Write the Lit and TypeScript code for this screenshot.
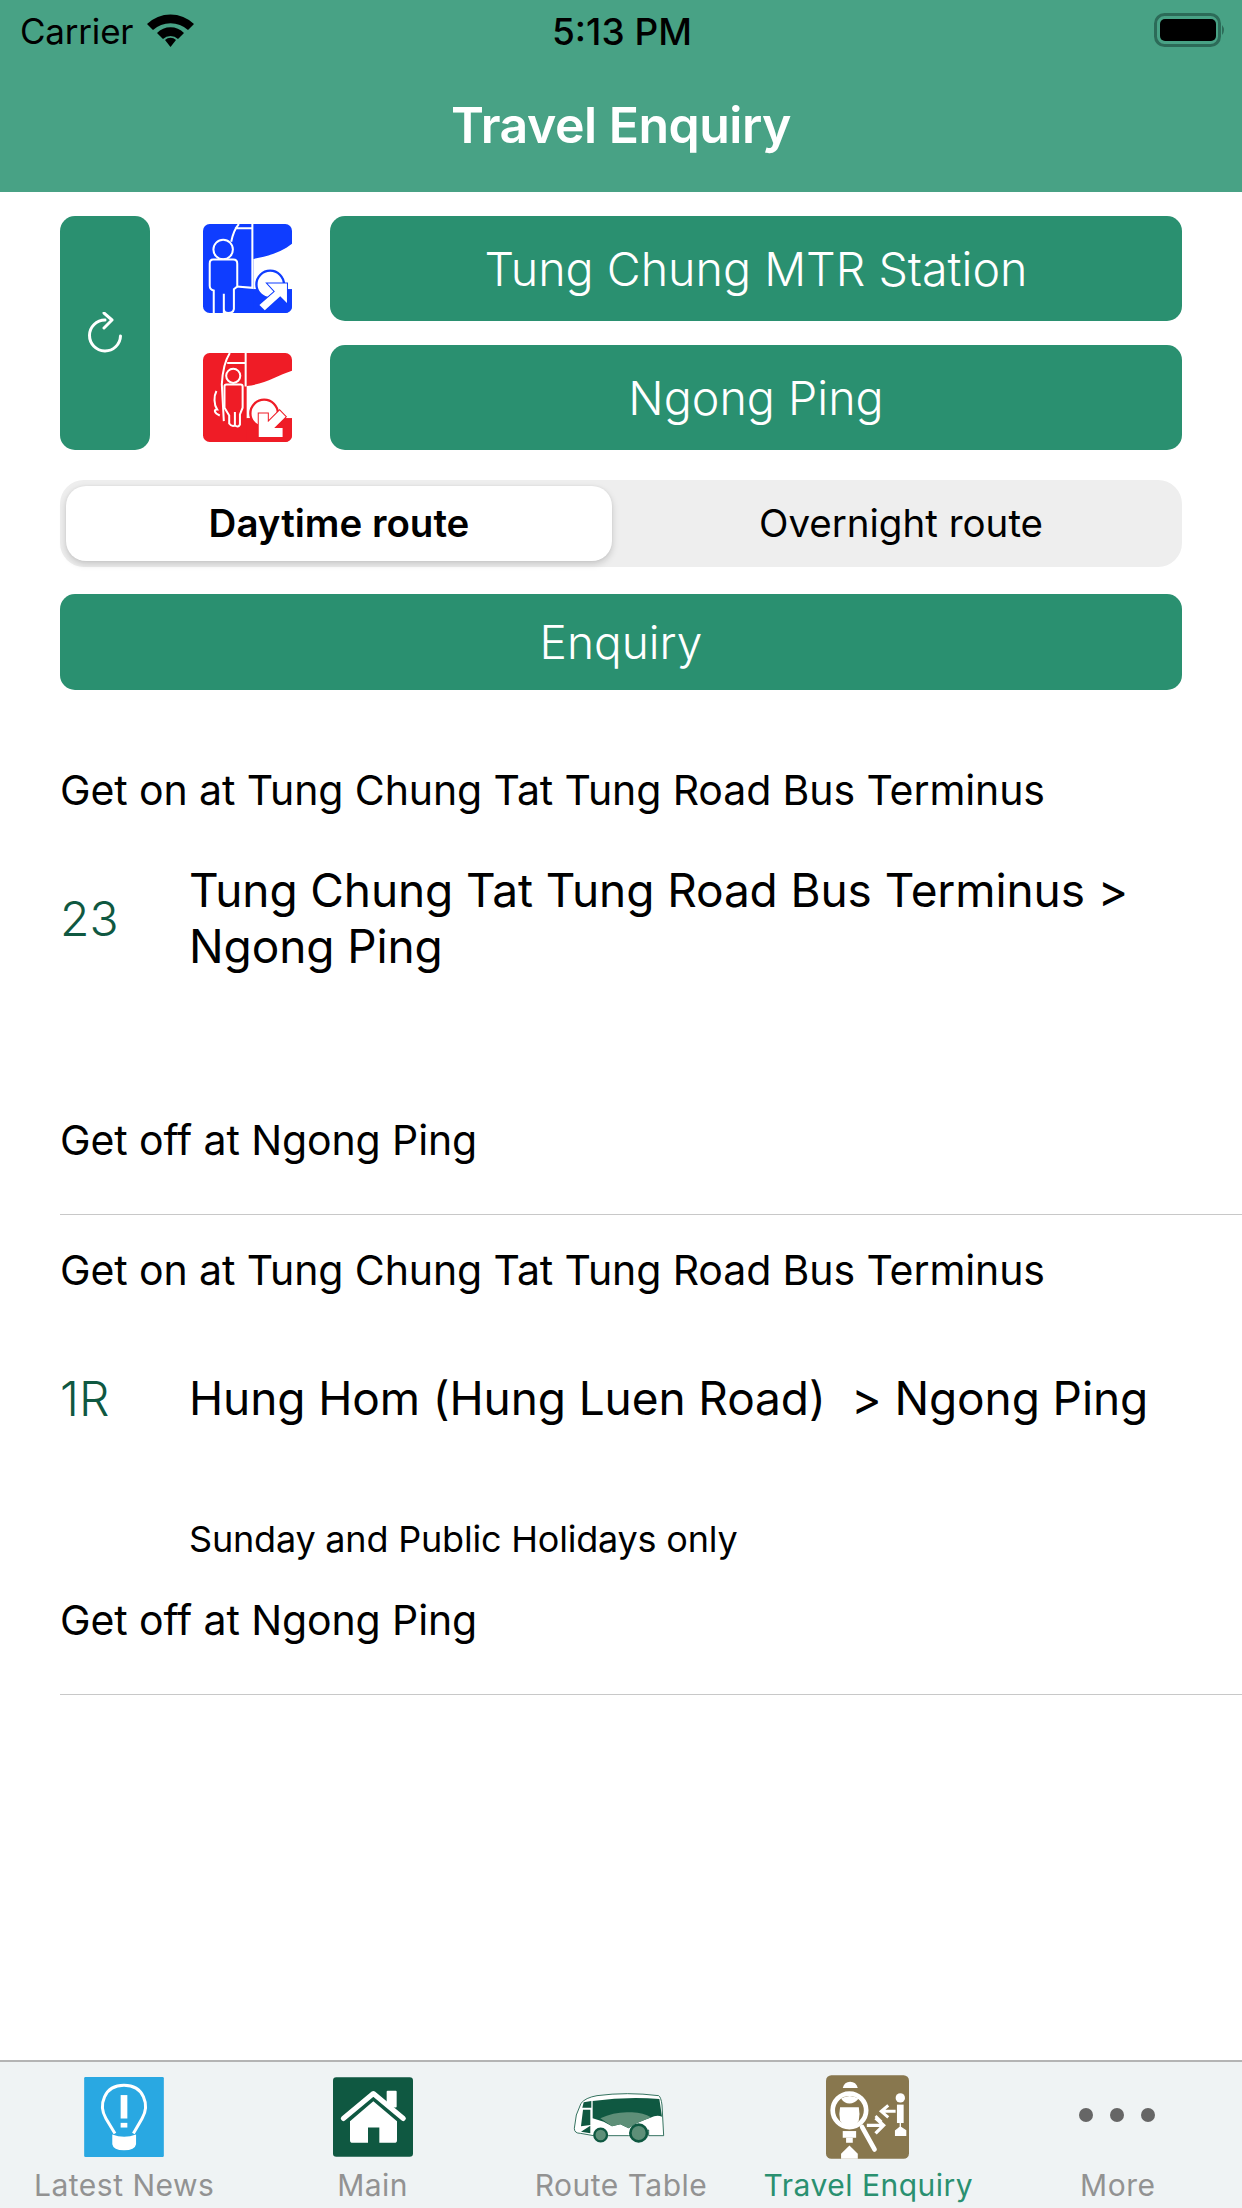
import { LitElement, html, css, svg } from "lit";
import { customElement } from "lit/decorators.js";

const results = [
  { on: "Get on at Tung Chung Tat Tung Road Bus Terminus", num: "23", title: "Tung Chung Tat Tung Road Bus Terminus > Ngong Ping", note: "", off: "Get off at Ngong Ping" },
  { on: "Get on at Tung Chung Tat Tung Road Bus Terminus", num: "1R", title: "Hung Hom (Hung Luen Road)  > Ngong Ping", note: "Sunday and Public Holidays only", off: "Get off at Ngong Ping" },
];

const blueIcon = html`<svg class="stop" viewBox="40 42 265 265">
  <defs><clipPath id="cb"><rect x="40" y="42" width="265" height="265" rx="20"/></clipPath></defs>
  <g clip-path="url(#cb)">
  <rect x="40" y="42" width="265" height="265" fill="#0f3dff"/>
  <path d="M190 146C235 138 275 125 305 101V236H190Z" fill="#fff"/>
  <path d="M187 42V232L140 228M147 42C135 55 128 75 124 95M135 55L187 55" fill="none" stroke="#fff" stroke-width="6"/>
  <circle cx="100" cy="118" r="29" fill="#0f3dff" stroke="#fff" stroke-width="6"/>
  <path d="M70 148H130Q142 148 142 160V228L132 236V295Q130 307 115 307Q102 307 102 295V250 310H72V240Q60 238 60 226V160Q60 148 70 148Z" fill="#0f3dff" stroke="#fff" stroke-width="6"/>
  <path d="M190 236H305V307H190Z" fill="#0f3dff"/>
  <circle cx="240" cy="222" r="41" fill="#fff" stroke="#0f3dff" stroke-width="7"/>
  <path d="M208 283L254 243L232 219H290V277L270 257L224 299Z" fill="#fff" stroke="#0f3dff" stroke-width="6" paint-order="stroke"/>
  </g>
</svg>`;

const redIcon = html`<svg class="stop" viewBox="40 42 265 265">
  <defs><clipPath id="cr"><rect x="40" y="42" width="265" height="265" rx="20"/></clipPath></defs>
  <g clip-path="url(#cr)">
  <rect x="40" y="42" width="265" height="265" fill="#ef1c26"/>
  <path d="M170 140C225 135 260 110 305 95V236H170Z" fill="#fff"/>
  <path d="M167 42V142M120 42C105 65 98 100 96 135L102 245M112 72H167" fill="none" stroke="#fff" stroke-width="6"/>
  <path d="M80 155C72 170 72 195 82 210C72 210 72 220 90 228" fill="none" stroke="#fff" stroke-width="6"/>
  <circle cx="130" cy="110" r="21" fill="#ef1c26" stroke="#fff" stroke-width="6"/>
  <path d="M110 136H152Q158 136 158 142V205L150 225V255Q145 265 135 258V218 258Q125 262 118 252V228L104 205V142Q104 136 110 136Z" fill="#ef1c26" stroke="#fff" stroke-width="6"/>
  <path d="M170 236H305V307H170Z" fill="#ef1c26"/>
  <circle cx="222" cy="222" r="41" fill="#fff" stroke="#ef1c26" stroke-width="7"/>
  <path d="M206 222H233V248L268 213L286 232L252 265H277V292H206Z" fill="#fff" stroke="#ef1c26" stroke-width="6" paint-order="stroke"/>
  </g>
</svg>`;

const bulb = svg`<svg class="ti" style="width:80px;height:80px" viewBox="253 111 238 239">
  <rect x="253" y="111" width="238" height="239" rx="4" fill="#29a8e2"/>
  <path d="M345 280L318 235C295 195 312 136 372 136C432 136 449 195 426 235L400 280" fill="none" stroke="#fff" stroke-width="9"/>
  <path d="M337 283Q372 296 408 283V312Q405 330 372 330Q340 330 337 312Z" fill="#fff"/>
  <rect x="362" y="165" width="20" height="70" fill="#fff"/><rect x="362" y="248" width="20" height="14" fill="#fff"/>
</svg>`;

const home = svg`<svg class="ti" style="width:80px;height:80px" viewBox="999 111 240 239">
  <rect x="999" y="111" width="240" height="239" rx="10" fill="#0f5841"/>
  <rect x="1160" y="152" width="30" height="50" rx="3" fill="#fff"/>
  <path d="M1030 235L1120 160L1210 235" fill="none" stroke="#fff" stroke-width="15" stroke-linecap="round" stroke-linejoin="round"/>
  <path d="M1120 183L1191 243V300Q1191 308 1183 308H1138V262H1104V308H1058Q1050 308 1050 300V243Z" fill="#fff"/>
</svg>`;

const bus = svg`<svg style="width:92px;height:50px;margin:16px 3px 0 0" viewBox="38 84 276 150">
  <path d="M42 190L48 150L62 115Q75 98 110 92Q200 80 295 92Q302 96 305 120L310 212H265V195L205 212H145L100 212 60 205Q42 205 42 190Z" fill="#fff" stroke="#0f5841" stroke-width="2.5"/>
  <path d="M97 108Q200 94 297 102L305 155Q290 148 270 158Q250 165 225 176L205 190L180 178L155 184L130 170L97 160Z" fill="#0f5841"/>
  <path d="M120 160Q165 138 215 142Q250 143 272 157L225 176L205 190L180 178L155 184Z" fill="#5e8f78"/>
  <path d="M70 112L93 108V128L66 128Z" fill="#0f5841"/>
  <path d="M68 134H90V180L62 184Z" fill="#0f5841"/>
  <path d="M62 200L90 182V205Z" fill="#0f5841"/>
  <circle cx="121" cy="210" r="19" fill="#5e8f78" stroke="#0f5841" stroke-width="7"/>
  <circle cx="235" cy="204" r="25" fill="#5e8f78" stroke="#0f5841" stroke-width="8"/>
</svg>`;

const enquiry = svg`<svg class="ti" style="width:83px;height:84px;margin:-2px 2px 0 0" viewBox="50 30 248 250">
  <rect x="50" y="30" width="248" height="250" rx="16" fill="#88774e"/>
  <path d="M100 68Q105 50 122 50Q140 50 145 68Z" fill="#fff"/>
  <circle cx="120" cy="135" r="50" fill="none" stroke="#fff" stroke-width="14"/>
  <path d="M95 100Q120 85 148 100Q135 115 120 115Q105 115 95 100Z" fill="#fff"/>
  <path d="M92 126H148Q152 145 148 165Q140 182 120 182Q100 182 92 165Q88 145 92 126Z" fill="#fff"/>
  <path d="M158 185L195 252" stroke="#fff" stroke-width="14" stroke-linecap="round"/>
  <rect x="100" y="197" width="40" height="20" fill="#fff"/><rect x="110" y="217" width="20" height="15" fill="#fff"/>
  <path d="M95 280V265L120 240L145 265V280Z" fill="#fff"/>
  <path d="M172 180H218M198 158L222 180L198 204" fill="none" stroke="#fff" stroke-width="10"/>
  <path d="M198 152L216 170" fill="none" stroke="#fff" stroke-width="8"/>
  <path d="M215 138H258M236 120L215 138L236 156" fill="none" stroke="#fff" stroke-width="9"/>
  <circle cx="272" cy="98" r="14" fill="#fff"/>
  <rect x="262" y="118" width="20" height="55" fill="#fff"/>
  <path d="M272 172V190M272 185L258 196V210H288V196Z" stroke="#fff" stroke-width="4" fill="#fff"/>
</svg>`;

const tabs = [
  { label: "Latest News", icon: bulb, active: false },
  { label: "Main", icon: home, active: false },
  { label: "Route Table", icon: bus, active: false },
  { label: "Travel Enquiry", icon: enquiry, active: true },
  { label: "More", icon: svg`<svg style="width:76px;height:80px;margin-right:2px" viewBox="0 0 76 80"><circle cx="7" cy="38" r="7" fill="#666"/><circle cx="38" cy="38" r="7" fill="#666"/><circle cx="69" cy="38" r="7" fill="#666"/></svg>`, active: false },
];

@customElement("app-root")
export class AppRoot extends LitElement {
  static styles = css`
    :host { display: block; width: 1242px; height: 2208px; font-family: Inter, "Noto Sans", sans-serif; color: #000; background: #fff; }
    .page { width: 1242px; height: 2208px; display: flex; flex-direction: column; overflow: hidden; }
    .header { height: 192px; background: #48a285; flex: none; display: flex; flex-direction: column; }
    .status { height: 62px; display: grid; grid-template-columns: 1fr auto 1fr; align-items: center; padding: 0 18px 0 20px; font-size: 35px; }
    .status-left { display: flex; align-items: center; gap: 14px; }
    .status-left svg { margin-top: -2px; }
    .carrier { font-weight: 400; letter-spacing: -0.2px; }
    .time { font-size: 37px; font-weight: 500; }
    .status-right { display: flex; justify-content: flex-end; margin: -2px -2px 0 0; }
    .title { flex: 1; display: flex; align-items: center; justify-content: center; color: #fff; font-size: 50px; font-weight: 600; letter-spacing: -0.5px; padding-bottom: 4px; }
    .content { flex: 1; display: flex; flex-direction: column; min-height: 0; }
    .search { padding: 24px 60px 0; display: flex; flex-direction: column; }
    .stops { display: flex; height: 234px; }
    .swap { width: 90px; background: #2a9070; border-radius: 15px; display: flex; align-items: center; justify-content: center; flex: none; }
    .stop-list { flex: 1; display: flex; flex-direction: column; gap: 24px; margin-left: 53px; }
    .stop-row { height: 105px; display: flex; align-items: center; gap: 38px; }
    .stop { width: 89px; height: 89px; flex: none; }
    .btn { background: #2a9070; color: #fff; border-radius: 15px; display: flex; align-items: center; justify-content: center; font-size: 46px; font-weight: 300; }
    .stop-btn { flex: 1; height: 105px; font-size: 46.6px; }
    .segment { margin-top: 30px; height: 87px; background: #eeeeee; border-radius: 24px; display: flex; padding: 6px 0 6px 6px; box-sizing: border-box; font-size: 38.5px; }
    .seg { display: flex; align-items: center; justify-content: center; padding-bottom: 2px; box-sizing: border-box; }
    .seg-on { width: 546px; background: #fff; border-radius: 20px; font-weight: 600; box-shadow: 0 3px 7px rgba(0,0,0,.17), 0 0 3px rgba(0,0,0,.05); }
    .seg-off { flex: 1; padding-left: 8px; }
    .enquiry { margin-top: 27px; height: 96px; }
    .results { margin-top: 45px; }
    .cell { height: 480px; margin-left: 60px; border-bottom: 1px solid #c8c8c8; box-sizing: border-box; display: flex; flex-direction: column; padding-top: 27px; }
    .line { height: 56px; display: flex; align-items: center; font-size: 41px; letter-spacing: -0.1px; flex: none; }
    .route { height: 200px; display: flex; align-items: center; flex: none; }
    .num { width: 130px; font-size: 48px; color: #0f5841; flex: none; font-weight: 300; }
    .route-title { font-size: 46px; line-height: 56px; letter-spacing: -0.1px; width: 1000px; white-space: pre-wrap; margin-left: -1px; }
    .note { height: 94px; font-size: 36px; letter-spacing: -0.2px; margin-left: 129px; padding-bottom: 12px; box-sizing: border-box; flex: none; display: flex; align-items: center; }
    .tabbar { height: 148px; flex: none; background: #eff3f4; border-top: 2px solid #b4b4b4; box-sizing: border-box; display: grid; grid-template-columns: repeat(5, 1fr); }
    .tab { display: flex; flex-direction: column; align-items: center; padding-top: 15px; color: #929292; font-size: 30px; }
    .tab-on { color: #2a9070; padding-right: 2px; }
    .tab-icon { height: 90px; display: flex; justify-content: center; align-items: flex-start; }
    .tab-label { line-height: 36px; letter-spacing: 0.5px; white-space: nowrap; }
  `;

  render() {
    return html`<div class="page">
      <div class="header">
        <div class="status">
          <div class="status-left"><span class="carrier">Carrier</span>
            <svg width="47" height="33" viewBox="0 0 47 33">
              <path d="M0 10A34 34 0 0 1 47 10L41 16A26 26 0 0 0 6 16Z"/>
              <path d="M10 20A19 19 0 0 1 37 20L31 26A11 11 0 0 0 16 26Z" transform="translate(0 -1)"/>
              <path d="M18 26A8 8 0 0 1 29 26L23.5 33Z"/>
            </svg></div>
          <div class="time">5:13 PM</div>
          <div class="status-right">
            <svg width="72" height="34" viewBox="0 0 72 34">
              <rect x="1.5" y="1.5" width="64" height="31" rx="9" fill="none" stroke="#2c6b58" stroke-width="3"/>
              <rect x="6" y="6" width="56" height="22" rx="5" fill="#000"/>
              <path d="M68 12Q72 17 68 22Z" fill="#2c6b58"/>
            </svg>
          </div>
        </div>
        <div class="title">Travel Enquiry</div>
      </div>
      <div class="content">
        <div class="search">
          <div class="stops">
            <div class="swap">
              <svg width="36" height="42" viewBox="0 0 36 42">
                <path d="M18 8A15.5 15.5 0 1 0 33.5 24" fill="none" stroke="#fff" stroke-width="3" stroke-linecap="round"/>
                <path d="M17 1L25 8L17 16" fill="none" stroke="#fff" stroke-width="3" stroke-linecap="round" stroke-linejoin="round"/>
              </svg>
            </div>
            <div class="stop-list">
              <div class="stop-row">${blueIcon}<div class="btn stop-btn">Tung Chung MTR Station</div></div>
              <div class="stop-row">${redIcon}<div class="btn stop-btn">Ngong Ping</div></div>
            </div>
          </div>
          <div class="segment"><div class="seg seg-on">Daytime route</div><div class="seg seg-off">Overnight route</div></div>
          <div class="btn enquiry">Enquiry</div>
        </div>
        <div class="results">
          ${results.map((r) => html`<div class="cell">
            <div class="line">${r.on}</div>
            <div class="route"><div class="num">${r.num}</div><div class="route-title">${r.title}</div></div>
            <div class="note">${r.note}</div>
            <div class="line">${r.off}</div>
          </div>`)}
        </div>
      </div>
      <div class="tabbar">
        ${tabs.map((t) => html`<div class="tab ${t.active ? "tab-on" : ""}"><div class="tab-icon">${t.icon}</div><div class="tab-label">${t.label}</div></div>`)}
      </div>
    </div>`;
  }
}
